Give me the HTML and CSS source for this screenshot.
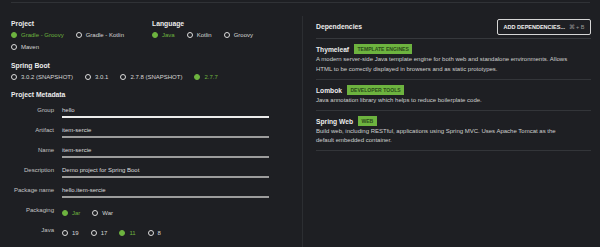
FILE: index.html
```html
<!DOCTYPE html>
<html lang="en">
<head>
  <meta charset="UTF-8">
  <title>Spring Initializr</title>
  <link rel="stylesheet" href="styles.css">
</head>
<body>
  <div class="topline"></div>

  <div class="main">
    <div class="config">
      <div class="pair">
        <div class="group group-project">
          <div class="label">Project</div>
          <div class="radios">
            <span class="radio on"><i></i>Gradle - Groovy</span>
            <span class="radio"><i></i>Gradle - Kotlin</span>
            <span class="radio"><i></i>Maven</span>
          </div>
        </div>
        <div class="group">
          <div class="label">Language</div>
          <div class="radios">
            <span class="radio on"><i></i>Java</span>
            <span class="radio"><i></i>Kotlin</span>
            <span class="radio"><i></i>Groovy</span>
          </div>
        </div>
      </div>

      <div class="group boot">
        <div class="label">Spring Boot</div>
        <div class="radios">
          <span class="radio"><i></i>3.0.2 (SNAPSHOT)</span>
          <span class="radio"><i></i>3.0.1</span>
          <span class="radio"><i></i>2.7.8 (SNAPSHOT)</span>
          <span class="radio on"><i></i>2.7.7</span>
        </div>
      </div>

      <div class="label meta-title">Project Metadata</div>
      <div class="field">
        <div class="field-label">Group</div>
        <div class="field-input focus">hello</div>
      </div>
      <div class="field">
        <div class="field-label">Artifact</div>
        <div class="field-input">item-sercie</div>
      </div>
      <div class="field">
        <div class="field-label">Name</div>
        <div class="field-input">item-sercie</div>
      </div>
      <div class="field">
        <div class="field-label">Description</div>
        <div class="field-input">Demo project for Spring Boot</div>
      </div>
      <div class="field">
        <div class="field-label">Package name</div>
        <div class="field-input">hello.item-sercie</div>
      </div>
      <div class="field">
        <div class="field-label">Packaging</div>
        <div class="radios field-radios">
          <span class="radio on"><i></i>Jar</span>
          <span class="radio"><i></i>War</span>
        </div>
      </div>
      <div class="field">
        <div class="field-label">Java</div>
        <div class="radios field-radios">
          <span class="radio"><i></i>19</span>
          <span class="radio"><i></i>17</span>
          <span class="radio on"><i></i>11</span>
          <span class="radio"><i></i>8</span>
        </div>
      </div>
    </div>

    <div class="deps">
      <div class="deps-head">
        <div class="label">Dependencies</div>
        <button class="add-btn">ADD DEPENDENCIES... <span class="kbd">⌘ + B</span></button>
      </div>

      <div class="dep">
        <div class="dep-name">Thymeleaf <span class="tag">Template Engines</span></div>
        <div class="dep-desc">A modern server-side Java template engine for both web and standalone environments. Allows HTML to be correctly displayed in browsers and as static prototypes.</div>
      </div>
      <div class="dep">
        <div class="dep-name">Lombok <span class="tag">Developer Tools</span></div>
        <div class="dep-desc">Java annotation library which helps to reduce boilerplate code.</div>
      </div>
      <div class="dep">
        <div class="dep-name">Spring Web <span class="tag">Web</span></div>
        <div class="dep-desc">Build web, including RESTful, applications using Spring MVC. Uses Apache Tomcat as the default embedded container.</div>
      </div>
    </div>
  </div>
</body>
</html>
```

FILE: styles.css
```css
body { margin: 0; background-color: #1e1f23; color: #d4d4d4; font-family: "Liberation Sans", Arial, sans-serif; font-size: 6px; overflow: hidden; }
.topline { margin: 2px 10px 0 11px; border-top: 1px solid #303236; }
.main { display: flex; align-items: flex-start; }

.config { width: 291px; padding: 16px 0 0 11px; }
.pair { display: flex; }
.group-project { width: 141px; }
.label { font-weight: bold; font-size: 6.8px; line-height: 10px; color: #ececec; }
.radios { display: flex; flex-wrap: wrap; column-gap: 12px; line-height: 12px; }
.radio { display: inline-flex; align-items: center; gap: 4px; color: #d6d6d6; }
.radio i { width: 6px; height: 6px; box-sizing: border-box; border: 1px solid #dcdcdc; border-radius: 50%; }
.radio.on { color: #6db33f; }
.radio.on i { background-color: #6db33f; border-color: #6db33f; }
.boot { margin-top: 8px; }
.meta-title { margin-top: 7px; }

.field { display: flex; height: 20px; }
.field-label { width: 43px; margin-right: 8px; padding-top: 5px; line-height: 10px; text-align: right; color: #c4c4c4; }
.field-input { width: 207px; height: 11px; padding-top: 5px; line-height: 10px; border-bottom: 2px solid #9c9c9c; color: #dedede; }
.field-input.focus { border-bottom-color: #ececec; }
.field-radios { padding-top: 5px; line-height: 10px; }

.deps { flex: 1; margin-top: 13px; min-height: 240px; border-left: 1px solid #2c2e32; padding: 0 9px 0 13px; }
.deps-head { display: flex; justify-content: space-between; align-items: center; padding: 3px 0; border-bottom: 1px solid #36383c; }
.add-btn { height: 16px; width: 94px; padding: 0; background: none; border: 1px solid #d6d6d6; border-radius: 2px; color: #f0f0f0; font-family: inherit; font-weight: bold; font-size: 5.5px; }
.add-btn .kbd { color: #9a9a9a; font-weight: normal; margin-left: 2px; }

.dep { padding: 5px 0 4.5px; border-bottom: 1px solid #333539; }
.dep-name { font-weight: bold; font-size: 6.7px; line-height: 11px; color: #ececec; }
.tag { display: inline-block; margin-left: 3px; padding: 0 3.5px; line-height: 10px; background-color: #6db33f; color: #2b4a1a; font-size: 5.1px; text-transform: uppercase; vertical-align: top; }
.dep-desc { max-width: 256px; line-height: 9.5px; color: #cfcfcf; }
```
